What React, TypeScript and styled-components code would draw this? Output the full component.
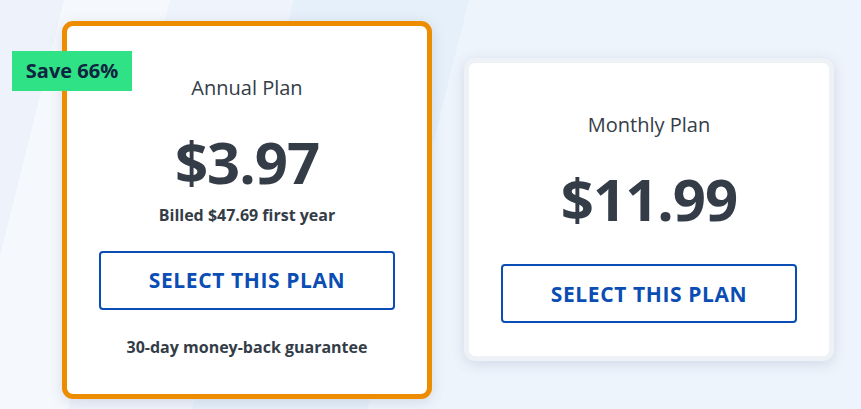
import React from "react";
import styled, { createGlobalStyle } from "styled-components";

interface Plan {
  name: string;
  price: string;
  billed?: string;
  guarantee?: string;
  badge?: string;
  featured?: boolean;
}

const GlobalStyle = createGlobalStyle`
  html, body {
    margin: 0;
    padding: 0;
  }
  body {
    font-family: "Open Sans", "Noto Sans", Arial, sans-serif;
    color: #343d47;
  }
`;

const Page = styled.div`
  width: 861px;
  height: 409px;
  box-sizing: border-box;
  overflow: hidden;
  display: flex;
  align-items: center;
  gap: 32px;
  padding: 10px 0 0 62px;
  background-color: #eef3fb;
  background-image: linear-gradient(
    104deg,
    #eef3fb 0px,
    #eef3fb 62px,
    #f5f9fd 62px,
    #f5f9fd 165px,
    #eff4fc 165px,
    #eff4fc 285px,
    #e6f0fa 285px,
    #e6f0fa 455px,
    #eef4fc 455px,
    #eef4fc 100%
  );
`;

const Card = styled.div<{ $featured?: boolean }>`
  position: relative;
  width: 370px;
  box-sizing: border-box;
  border: 5px solid ${(p) => (p.$featured ? "#ee8c00" : "#eef1f5")};
  border-radius: 11px;
  background: #fff;
  box-shadow: 0 3px 14px rgba(60, 80, 120, 0.16);
  padding: 50px 32px 33px;
  display: flex;
  flex-direction: column;
  align-items: center;
  text-align: center;
`;

const Badge = styled.div`
  position: absolute;
  left: -55px;
  top: 25px;
  width: 120px;
  height: 40px;
  display: flex;
  align-items: center;
  justify-content: center;
  background: #2ee285;
  color: #0f2440;
  font-size: 20px;
  font-weight: 700;
`;

const PlanName = styled.div`
  font-size: 20px;
  line-height: 24px;
  color: #343d47;
`;

const Price = styled.div`
  margin-top: 32px;
  font-size: 58px;
  line-height: 60px;
  font-weight: 700;
  color: #343d47;
  letter-spacing: -1px;
`;

const Billed = styled.div`
  margin-top: 13px;
  font-size: 16px;
  line-height: 20px;
  font-weight: 700;
  color: #343d47;
`;

const SelectButton = styled.button<{ $afterNote?: boolean }>`
  margin-top: ${(p) => (p.$afterNote ? "26px" : "35px")};
  width: 296px;
  height: 59px;
  box-sizing: border-box;
  border: 2px solid #0a4db5;
  border-radius: 4px;
  background: #fff;
  color: #0a4db5;
  font-family: "Open Sans", "Noto Sans", Arial, sans-serif;
  font-size: 21px;
  font-weight: 700;
  letter-spacing: 0.6px;
  cursor: pointer;
`;

const Guarantee = styled.div`
  margin: 26px 0 3px;
  font-size: 16px;
  line-height: 22px;
  font-weight: 700;
  color: #343d47;
`;

const plans: Plan[] = [
  {
    name: "Annual Plan",
    price: "$3.97",
    billed: "Billed $47.69 first year",
    guarantee: "30-day money-back guarantee",
    badge: "Save 66%",
    featured: true,
  },
  {
    name: "Monthly Plan",
    price: "$11.99",
  },
];

const PlanCard: React.FC<{ plan: Plan }> = ({ plan }) => (
  <Card $featured={plan.featured}>
    {plan.badge && <Badge>{plan.badge}</Badge>}
    <PlanName>{plan.name}</PlanName>
    <Price>{plan.price}</Price>
    {plan.billed && <Billed>{plan.billed}</Billed>}
    <SelectButton $afterNote={!!plan.billed}>SELECT THIS PLAN</SelectButton>
    {plan.guarantee && <Guarantee>{plan.guarantee}</Guarantee>}
  </Card>
);

export default function App() {
  return (
    <>
      <GlobalStyle />
      <Page>
        {plans.map((plan) => (
          <PlanCard key={plan.name} plan={plan} />
        ))}
      </Page>
    </>
  );
}
